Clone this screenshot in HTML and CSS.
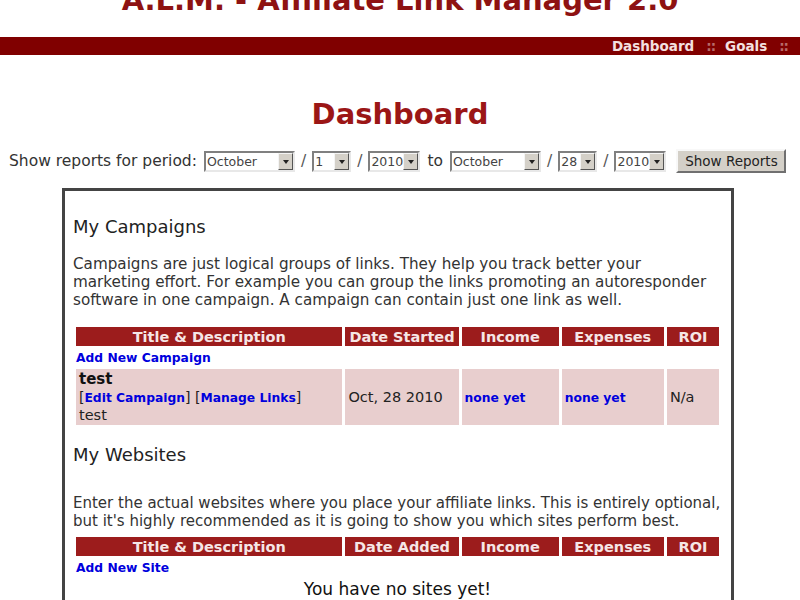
FILE: index.html
```html
<!DOCTYPE html>
<html>
<head>
<meta charset="utf-8">
<title>A.L.M. - Affiliate Link Manager 2.0</title>
<link rel="stylesheet" href="styles.css">
</head>
<body>
<h1 class="site-title">A.L.M. - Affiliate Link Manager 2.0</h1>
<div class="topbar">
  <a class="nav-link" href="#">Dashboard</a><span class="sep">::</span><a class="nav-link" href="#">Goals</a><span class="sep">::</span>
</div>
<h2 class="page-title">Dashboard</h2>
<form class="period">
  <span class="label">Show reports for period:</span>
  <span class="select w-month"><span class="val">October</span><span class="arrow"></span></span>
  <span class="slash">/</span>
  <span class="select w-day"><span class="val">1</span><span class="arrow"></span></span>
  <span class="slash">/</span>
  <span class="select w-year"><span class="val">2010</span><span class="arrow"></span></span>
  <span class="to">to</span>
  <span class="select w-month"><span class="val">October</span><span class="arrow"></span></span>
  <span class="slash">/</span>
  <span class="select w-day"><span class="val">28</span><span class="arrow"></span></span>
  <span class="slash">/</span>
  <span class="select w-year"><span class="val">2010</span><span class="arrow"></span></span>
  <button type="button" class="btn">Show Reports</button>
</form>
<div class="box">
  <h3 class="sec-title first">My Campaigns</h3>
  <p class="desc first">Campaigns are just logical groups of links. They help you track better your<br>marketing effort. For example you can group the links promoting an autoresponder<br>software in one campaign. A campaign can contain just one link as well.</p>
  <table class="grid first">
    <tr class="head">
      <th class="c1">Title &amp; Description</th>
      <th class="c2">Date Started</th>
      <th class="c3">Income</th>
      <th class="c4">Expenses</th>
      <th class="c5">ROI</th>
    </tr>
    <tr class="add"><td colspan="5"><a href="#">Add New Campaign</a></td></tr>
    <tr class="row">
      <td><div class="name">test</div><div class="links">[<a href="#">Edit Campaign</a>] [<a href="#">Manage Links</a>]</div><div class="note">test</div></td>
      <td>Oct, 28 2010</td>
      <td><a href="#">none yet</a></td>
      <td><a href="#">none yet</a></td>
      <td>N/a</td>
    </tr>
  </table>
  <h3 class="sec-title second">My Websites</h3>
  <p class="desc second">Enter the actual websites where you place your affiliate links. This is entirely optional,<br>but it's highly recommended as it is going to show you which sites perform best.</p>
  <table class="grid second">
    <tr class="head">
      <th class="c1">Title &amp; Description</th>
      <th class="c2">Date Added</th>
      <th class="c3">Income</th>
      <th class="c4">Expenses</th>
      <th class="c5">ROI</th>
    </tr>
    <tr class="add"><td colspan="5"><a href="#">Add New Site</a></td></tr>
    <tr class="empty"><td colspan="5">You have no sites yet!</td></tr>
  </table>
</div>
</body>
</html>
```
FILE: styles.css
```css
html, body {
  margin: 0;
  padding: 0;
  background: #ffffff;
  font-family: "DejaVu Sans", Verdana, sans-serif;
  color: #222222;
  overflow: hidden;
}

.site-title {
  margin: -17px 0 0 0;
  height: 34px;
  line-height: 34px;
  font-size: 29px;
  font-weight: bold;
  color: #8e1212;
  text-align: center;
  white-space: nowrap;
}

.topbar {
  margin-top: 20px;
  height: 18px;
  background: #800000;
  display: flex;
  justify-content: flex-end;
  align-items: center;
  padding-right: 2px;
  font-size: 13.5px;
  font-weight: bold;
}

.nav-link {
  color: #f4e0e0;
  text-decoration: none;
}

.sep {
  color: #b86a6a;
  margin: 0 10px 0 12px;
  letter-spacing: -1px;
}

.page-title {
  margin: 42px 0 0 0;
  height: 34px;
  line-height: 34px;
  font-size: 29px;
  font-weight: bold;
  color: #9b1616;
  text-align: center;
}

.period {
  margin: 18px 0 0 9px;
  height: 24px;
  display: flex;
  align-items: center;
  font-size: 15.5px;
  color: #333333;
  white-space: nowrap;
}

.label {
  margin-right: 7px;
}

.select {
  display: flex;
  align-items: stretch;
  height: 21px;
  box-sizing: border-box;
  border: 2px solid;
  border-color: #808080 #e8e8e8 #e8e8e8 #808080;
  background: #ffffff;
  font-size: 12.5px;
  color: #444444;
}

.select .val {
  flex: 1;
  padding-left: 1px;
  line-height: 17px;
  overflow: hidden;
  white-space: nowrap;
}

.select .arrow {
  width: 15px;
  background: #d4d0c8;
  box-sizing: border-box;
  border: 1px solid;
  border-color: #f4f4f4 #555555 #555555 #f4f4f4;
  position: relative;
}

.select .arrow::after {
  content: "";
  position: absolute;
  left: 4px;
  top: 6px;
  border-left: 3px solid transparent;
  border-right: 3px solid transparent;
  border-top: 4px solid #222222;
}

.w-month { width: 91px; }
.w-day { width: 39px; }
.w-year { width: 52px; }

.slash {
  margin: 0 6px;
  color: #555555;
}

.to {
  margin: 0 7px;
}

.btn {
  margin-left: 10px;
  width: 110px;
  height: 24px;
  background: #d4d0c8;
  border: 2px solid;
  border-color: #f8f8f8 #707070 #707070 #f8f8f8;
  font-family: "DejaVu Sans", Verdana, sans-serif;
  font-size: 13.5px;
  color: #222222;
  padding: 0;
  white-space: nowrap;
}

.box {
  margin: 15px 0 0 62px;
  width: 672px;
  box-sizing: border-box;
  border: 3px solid #444444;
  border-bottom: none;
  padding: 0 9px 40px 8px;
}

.sec-title {
  margin: 0;
  height: 20px;
  line-height: 20px;
  font-size: 18px;
  font-weight: normal;
  color: #222222;
}

.sec-title.first { margin-top: 26px; }
.sec-title.second { margin-top: 17px; }

.desc {
  margin: 0;
  font-size: 15.2px;
  line-height: 18px;
  color: #333333;
  white-space: nowrap;
}

.desc.first { margin-top: 18px; }
.desc.second { margin-top: 29px; }

.desc.second {
  font-size: 15px;
}

.grid {
  width: 649px;
  border-collapse: separate;
  border-spacing: 3px;
  table-layout: fixed;
}

.grid.first { margin-top: 15px; }
.grid.second { margin-top: 4px; }

.grid th {
  height: 19px;
  padding: 0;
  background: #9c1c1c;
  color: #f6e6e6;
  font-size: 14.5px;
  font-weight: bold;
  text-align: center;
  white-space: nowrap;
  overflow: hidden;
}

.c1 { width: 266px; }
.c2 { width: 113px; }
.c3 { width: 97px; }
.c4 { width: 102px; }
.c5 { width: 52px; }

.grid a {
  color: #0000dd;
  font-weight: bold;
  font-size: 12.3px;
  text-decoration: none;
}

.add td {
  height: 16px;
  padding: 0;
  line-height: 16px;
}

.row td {
  height: 56px;
  padding: 0 3px;
  background: #e8cece;
  font-size: 14.5px;
  color: #222222;
  vertical-align: middle;
  white-space: nowrap;
}

.name {
  font-weight: bold;
  font-size: 15px;
  line-height: 18px;
  color: #111111;
}

.links {
  line-height: 18px;
  font-size: 14px;
}

.note {
  line-height: 17px;
}

.empty td {
  height: 18px;
  padding: 0;
  text-align: center;
  font-size: 17px;
  color: #111111;
}
```
